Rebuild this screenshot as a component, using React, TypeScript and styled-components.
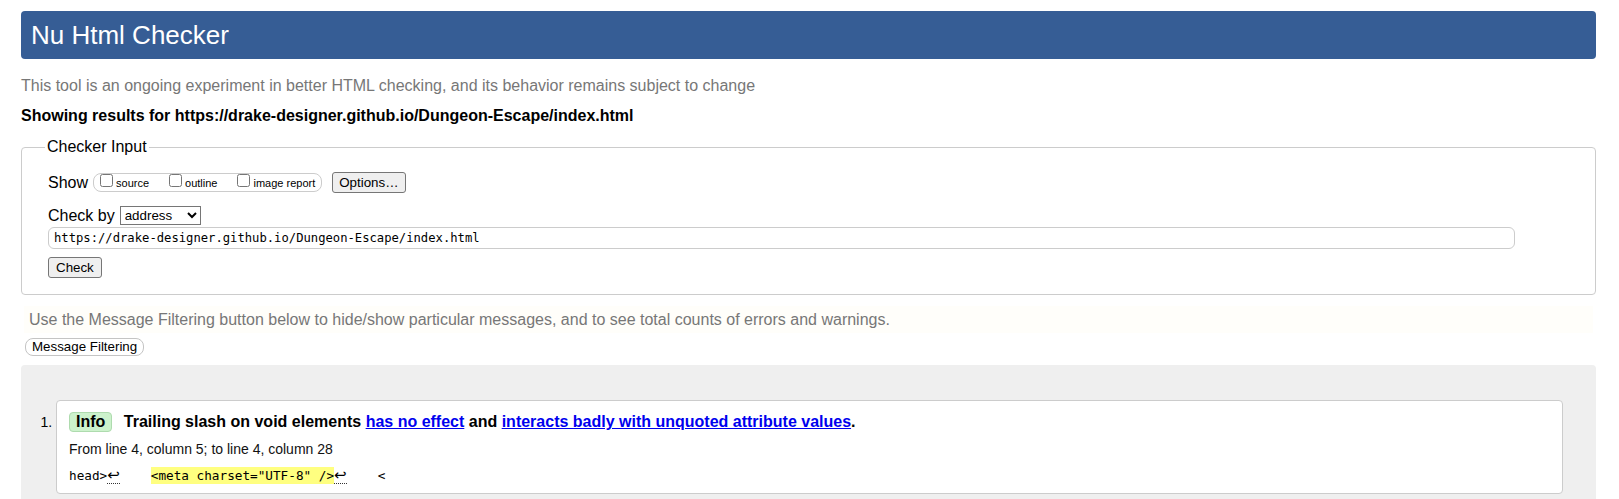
import React from 'react';
import styled, { createGlobalStyle } from 'styled-components';

const GlobalStyle = createGlobalStyle`
  html, body { margin: 0; padding: 0; background: #ffffff; }
  body { font-family: "Liberation Sans", Arial, sans-serif; color: #000; }
  * { box-sizing: border-box; }
`;

const Page = styled.div`
  display: flex;
  flex-direction: column;
  min-height: 499px;
  padding: 11px 23px 0 21px;
`;

const Header = styled.header`
  height: 48px;
  display: flex;
  align-items: center;
  padding-left: 10px;
  background: #365d95;
  border-radius: 4px;
`;

const Title = styled.h1`
  margin: 0;
  font-size: 26px;
  line-height: 30px;
  font-weight: normal;
  color: #ffffff;
`;

const Intro = styled.p`
  margin: 18px 0 0;
  font-size: 16px;
  line-height: 18px;
  color: #777777;
`;

const ResultsFor = styled.p`
  margin: 12px 0 0;
  font-size: 16px;
  line-height: 18px;
  font-weight: bold;
`;

const Fieldset = styled.fieldset`
  margin: 13px 0 0;
  padding: 16px 26px 16px;
  min-width: 0;
  border: 1px solid #cccccc;
  border-radius: 4px;
`;

const Legend = styled.legend`
  margin-left: -3px;
  padding: 0 2px;
  font-size: 16px;
  line-height: 18px;
`;

const ControlRow = styled.div<{ $gap?: number }>`
  display: flex;
  align-items: center;
  height: 21px;
  margin-bottom: ${(p) => p.$gap ?? 0}px;
  font-size: 16px;
`;

const RowLabel = styled.span`
  margin-right: 5px;
`;

const CheckGroup = styled.span`
  display: inline-flex;
  align-items: center;
  gap: 20px;
  height: 19px;
  padding: 0 6px;
  border: 1px solid #cccccc;
  border-radius: 8px;
  font-size: 11px;
`;

const CheckLabel = styled.label`
  display: inline-flex;
  align-items: center;
  height: 17px;
`;

const CheckBox = styled.input`
  align-self: flex-start;
  width: 13px;
  height: 13px;
  margin: 0 3px 0 0;
`;

const Button = styled.button<{ $spaced?: boolean }>`
  height: 21px;
  margin-left: ${(p) => (p.$spaced ? 10 : 0)}px;
  padding: 0 6px;
  font: 13.333px "Liberation Sans", Arial, sans-serif;
  color: #000;
  background: #efefef;
  border: 1px solid #767676;
  border-radius: 3px;
`;

const CheckButton = styled(Button)`
  align-self: flex-start;
  margin-top: 8px;
  padding: 0 7px;
`;

const Select = styled.select`
  width: 81px;
  height: 19px;
  font: 13.333px "Liberation Sans", Arial, sans-serif;
  color: #000;
  background: #fff;
  border: 1px solid #767676;
  border-radius: 0;
`;

const UrlInput = styled.input`
  display: block;
  width: calc(100% - 54px);
  height: 22px;
  margin-top: 1px;
  padding: 0 5px;
  font: 12.2px "DejaVu Sans Mono", monospace;
  color: #000;
  border: 1px solid #cccccc;
  border-radius: 6px;
`;

const FieldBody = styled.div`
  display: flex;
  flex-direction: column;
`;

const FilterNote = styled.p`
  margin: 11px 3px 0;
  padding: 0 5px;
  height: 27px;
  font-size: 16px;
  line-height: 27px;
  color: #777777;
  background: #fffefa;
`;

const PillButton = styled.button`
  align-self: flex-start;
  height: 18px;
  margin: 5px 0 0 4px;
  padding: 0 6px;
  font: 13.333px "Liberation Sans", Arial, sans-serif;
  line-height: 16px;
  color: #000;
  background: #ffffff;
  border: 1px solid #c4c4c4;
  border-radius: 8px;
`;

const Results = styled.div`
  flex: 1;
  margin-top: 9px;
  padding: 35px 33px 20px 0;
  background: #efefef;
  border-radius: 4px 4px 0 0;
`;

const MessageList = styled.ol`
  margin: 0;
  padding-left: 35px;
  font-size: 14px;
`;

const MessageItem = styled.li`
  padding: 11px 12px 9px;
  background: #ffffff;
  border: 1px solid #cccccc;
  border-radius: 4px;
`;

const Heading = styled.p`
  margin: 0;
  font-size: 16px;
  line-height: 20px;
  font-weight: bold;
`;

const Badge = styled.strong<{ $tone: 'info' | 'error' }>`
  display: inline-block;
  margin-right: 7px;
  padding: 0 6px;
  line-height: 18px;
  background: ${(p) => (p.$tone === 'info' ? '#ccf2cc' : '#ffcccc')};
  border: 1px solid ${(p) => (p.$tone === 'info' ? '#aedbae' : '#e0a0a0')};
  border-radius: 4px;
`;

const DocLink = styled.a`
  color: #0000ee;
  text-decoration: underline;
`;

const Location = styled.p`
  margin: 9px 0 0;
  font-size: 14px;
  line-height: 16px;
  color: #111;
`;

const Extract = styled.p`
  margin: 10px 0 0;
  font: 12.7px "DejaVu Sans Mono", monospace;
  line-height: 17px;
  white-space: pre;
  color: #000;
`;

const LineBreak = styled.b`
  display: inline-block;
  width: 13px;
  font: 15px "DejaVu Sans", sans-serif;
  line-height: 15px;
  border-bottom: 1px dotted #333;
`;

const Mark = styled.mark`
  display: inline-block;
  line-height: 17px;
  background: #ffff80;
  color: #000;
`;

const url = 'https://drake-designer.github.io/Dungeon-Escape/index.html';

export default function App() {
  return (
    <>
      <GlobalStyle />
      <Page>
        <Header>
          <Title>Nu Html Checker</Title>
        </Header>
        <Intro>
          This tool is an ongoing experiment in better HTML checking, and its behavior remains subject to change
        </Intro>
        <ResultsFor>Showing results for {url}</ResultsFor>
        <Fieldset>
          <Legend>Checker Input</Legend>
          <FieldBody>
            <ControlRow $gap={12}>
              <RowLabel>Show</RowLabel>
              <CheckGroup>
                <CheckLabel>
                  <CheckBox type="checkbox" />
                  source
                </CheckLabel>
                <CheckLabel>
                  <CheckBox type="checkbox" />
                  outline
                </CheckLabel>
                <CheckLabel>
                  <CheckBox type="checkbox" />
                  image report
                </CheckLabel>
              </CheckGroup>
              <Button type="button" $spaced>
                Options…
              </Button>
            </ControlRow>
            <ControlRow>
              <RowLabel>Check by</RowLabel>
              <Select defaultValue="address">
                <option value="address">address</option>
                <option value="file">file upload</option>
                <option value="text">text input</option>
              </Select>
            </ControlRow>
            <UrlInput type="url" defaultValue={url} readOnly />
            <CheckButton type="button">Check</CheckButton>
          </FieldBody>
        </Fieldset>
        <FilterNote>
          Use the Message Filtering button below to hide/show particular messages, and to see total counts of errors
          and warnings.
        </FilterNote>
        <PillButton type="button">Message Filtering</PillButton>
        <Results>
          <MessageList>
            <MessageItem>
              <Heading>
                <Badge $tone="info">Info</Badge> Trailing slash on void elements{' '}
                <DocLink href="#">has no effect</DocLink> and{' '}
                <DocLink href="#">interacts badly with unquoted attribute values</DocLink>.
              </Heading>
              <Location>From line 4, column 5; to line 4, column 28</Location>
              <Extract>
                head&gt;<LineBreak title="Line break">↩</LineBreak>
                {'    '}
                <Mark>{'<meta charset="UTF-8" />'}</Mark>
                <LineBreak title="Line break">↩</LineBreak>
                {'    <'}
              </Extract>
            </MessageItem>
          </MessageList>
        </Results>
      </Page>
    </>
  );
}
